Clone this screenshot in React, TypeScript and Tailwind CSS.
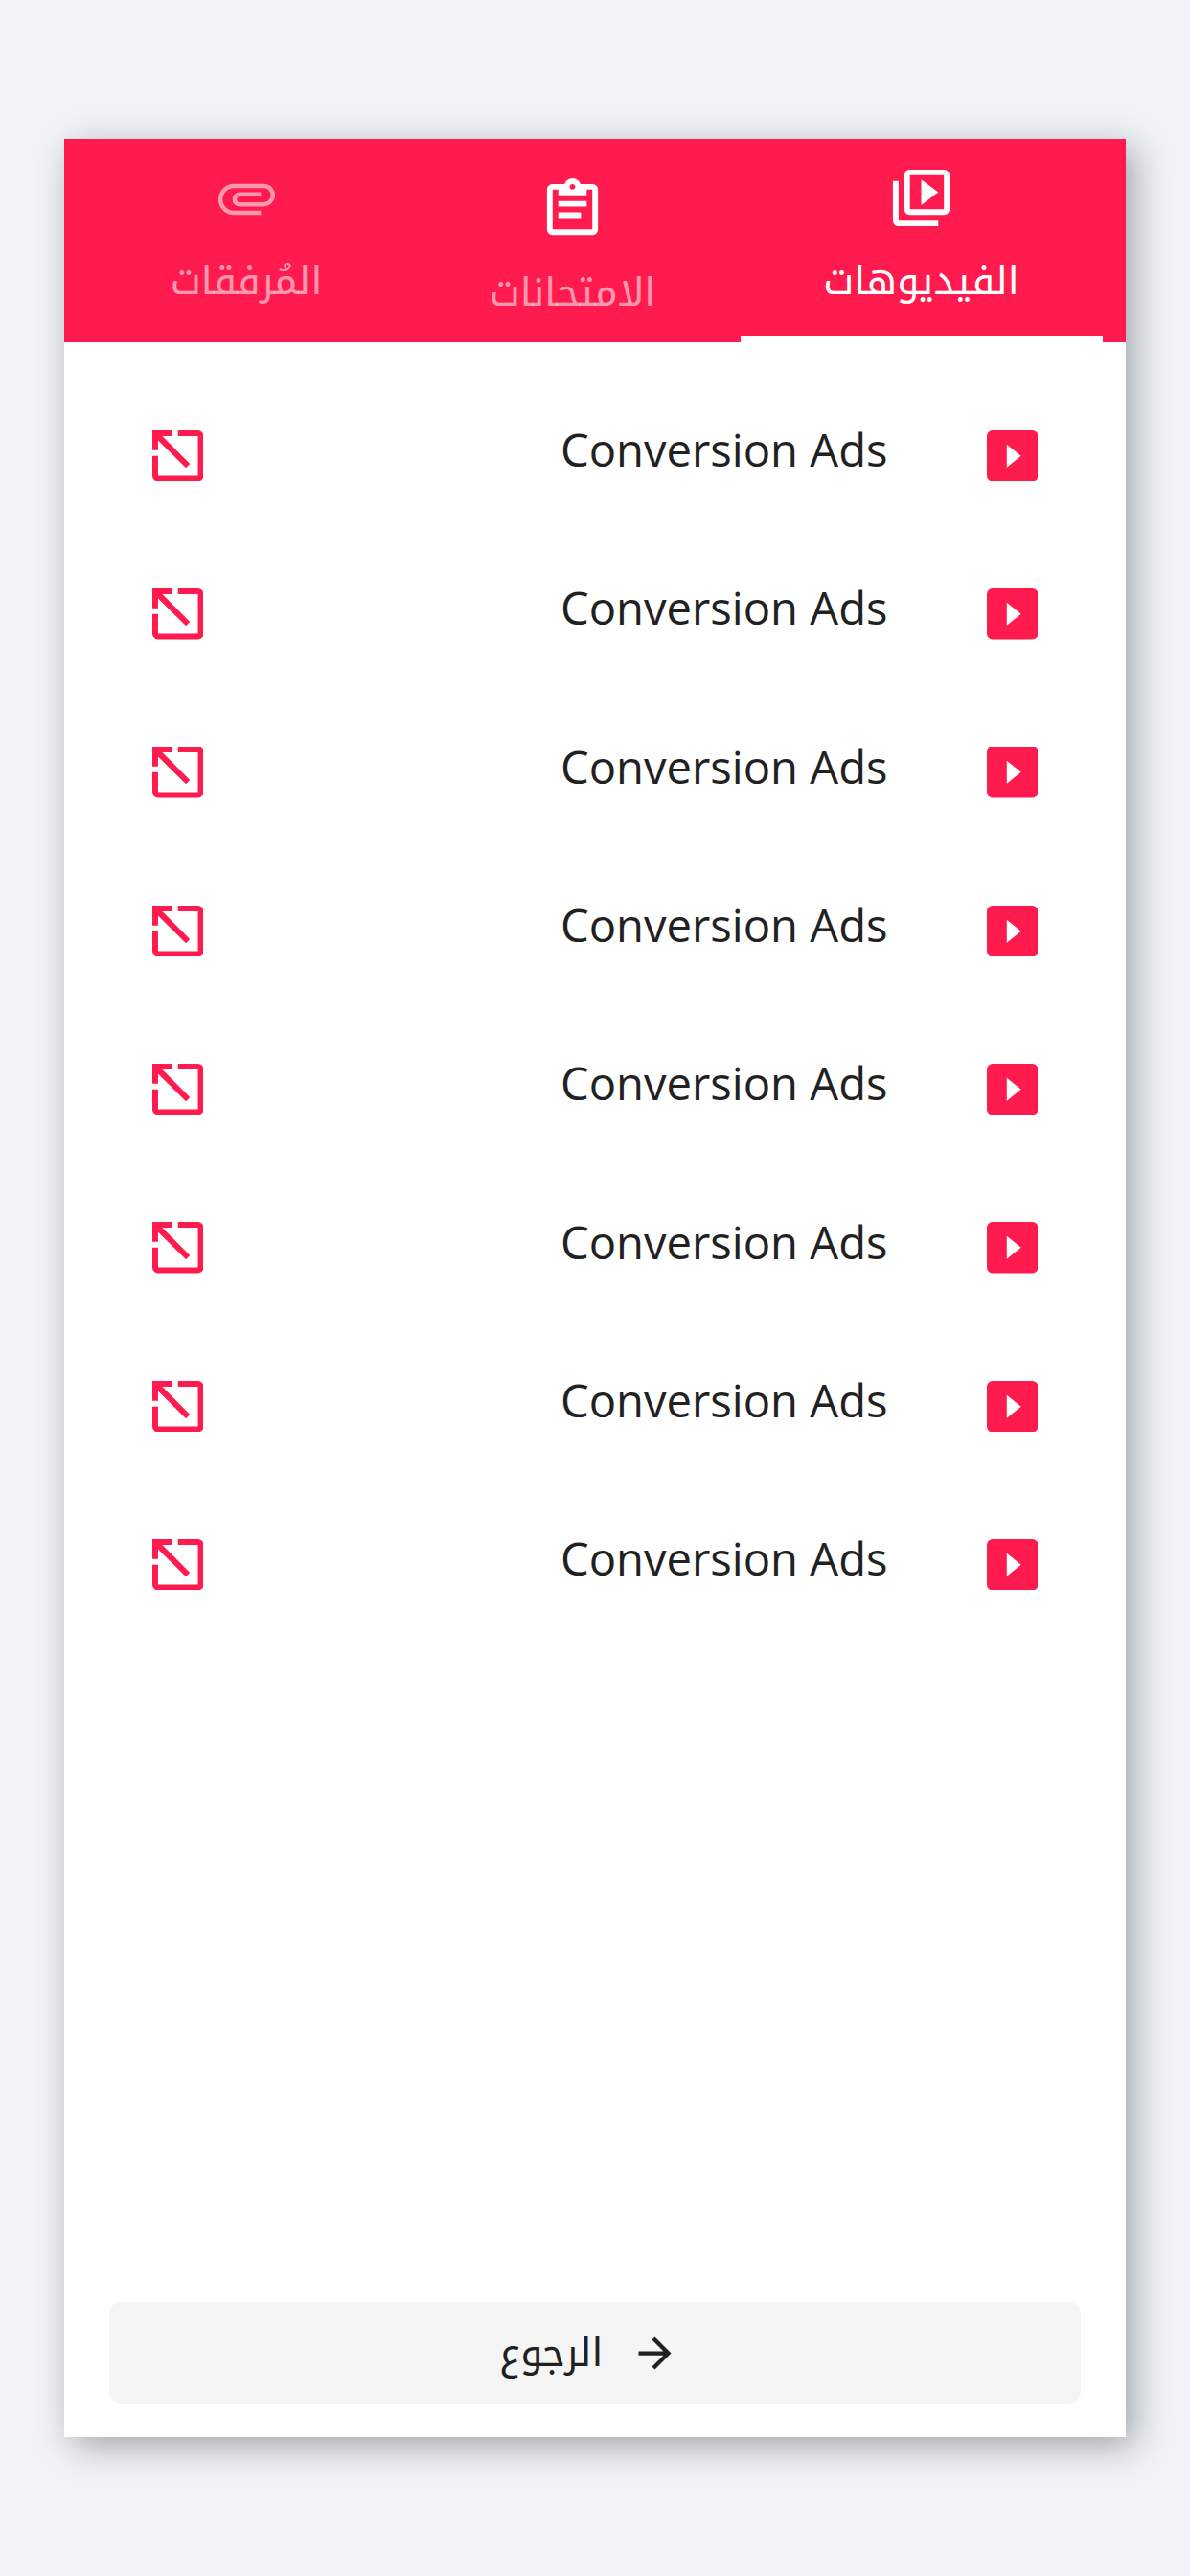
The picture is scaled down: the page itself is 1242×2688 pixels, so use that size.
import React from "react";

type IconProps = { className?: string };

const VideoLibraryIcon = ({ className }: IconProps) => (
  <svg viewBox="0 0 24 24" fill="currentColor" className={className}>
    <path d="M4 6H2v14c0 1.1.9 2 2 2h14v-2H4V6zm16-4H8c-1.1 0-2 .9-2 2v12c0 1.1.9 2 2 2h12c1.1 0 2-.9 2-2V4c0-1.1-.9-2-2-2zm0 14H8V4h12v12zM12 5.5v9l6-4.5-6-4.5z" />
  </svg>
);

const ClipboardIcon = ({ className }: IconProps) => (
  <svg viewBox="0 0 24 24" fill="currentColor" className={className}>
    <path
      fillRule="evenodd"
      d="M19 3h-4.18C14.4 1.84 13.3 1 12 1s-2.4.84-2.82 2H5c-1.1 0-2 .9-2 2v14c0 1.1.9 2 2 2h14c1.1 0 2-.9 2-2V5c0-1.1-.9-2-2-2zM12 3c.55 0 1 .45 1 1s-.45 1-1 1-1-.45-1-1 .45-1 1-1zM5 5h2v2h10V5h2v14H5zM7 9v2h10V9zM7 13v2h8v-2z"
    />
  </svg>
);

const AttachmentIcon = ({ className }: IconProps) => (
  <svg viewBox="0 0 24 24" fill="currentColor" className={className}>
    <path d="M2 12.5C2 9.46 4.46 7 7.5 7H18c2.21 0 4 1.79 4 4s-1.79 4-4 4H9.500C8.120 15 7 13.880 7 12.500S8.120 10 9.500 10H17v1.500H9.410c-.55 0-.91.45-.91 1s.36 1 .91 1H18c1.380 0 2.500-1.120 2.500-2.500S19.380 8.500 18 8.500H7.500c-2.210 0-4 1.790-4 4s1.790 4 4 4H17V18H7.500C4.460 18 2 15.540 2 12.500z" />
  </svg>
);

const OpenIcon = ({ className }: IconProps) => (
  <svg viewBox="0 0 18 18" fill="currentColor" className={className}>
    <path d="M0 0H7V2H3.500L13.200 11.800L11.800 13.200L2 3.500V7H0zM9 0H16A2 2 0 0 1 18 2V16A2 2 0 0 1 16 18H2A2 2 0 0 1 0 16V9H2V16H16V2H9z" />
  </svg>
);

const PlayBoxIcon = ({ className }: IconProps) => (
  <svg viewBox="0 0 18 18" fill="currentColor" className={className}>
    <path fillRule="evenodd" d="M2 0H16A2 2 0 0 1 18 2V16A2 2 0 0 1 16 18H2A2 2 0 0 1 0 16V2A2 2 0 0 1 2 0zM7 5V13L12 9z" />
  </svg>
);

const ArrowIcon = ({ className }: IconProps) => (
  <svg viewBox="0 0 24 24" fill="currentColor" className={className}>
    <path d="M12 4l-1.410 1.410L16.170 11H4v2h12.170l-5.580 5.590L12 20l8-8z" />
  </svg>
);

const lessons = Array.from({ length: 8 }, () => "Conversion Ads");

export default function App() {
  return (
    <div className="flex h-[2688px] w-[1242px] flex-col bg-[#f0f4f9] pl-[67px] pt-[144.500px] font-['Open_Sans','Noto_Kufi_Arabic','Noto_Sans_Arabic','DejaVu_Sans',sans-serif] text-[#212121]">
      <main className="flex h-[2398.500px] w-[1108px] flex-col bg-white shadow-[9px_9px_36px_rgba(0,0,0,0.33)]">
        <nav dir="rtl" className="flex h-[212.500px] shrink-0 bg-[#ff1b4e] pr-6 text-[41.200px] leading-none text-white">
          <div className="flex w-[378px] flex-col items-center border-b-[6px] border-white pr-px pt-[26.500px]">
            <VideoLibraryIcon className="size-[71px]" />
            <span className="mt-[29px] whitespace-nowrap">الفيديوهات</span>
          </div>
          <div className="flex w-[350px] flex-col items-center pr-px pt-[38.500px]">
            <ClipboardIcon className="size-[71px]" />
            <span className="mt-[29px] whitespace-nowrap text-white/55">الامتحانات</span>
          </div>
          <div className="flex w-[332px] flex-col items-center pt-[26.500px] text-white/55">
            <AttachmentIcon className="size-[71px]" />
            <span className="mt-[29px] whitespace-nowrap">المُرفقات</span>
          </div>
        </nav>
        <ul className="flex flex-1 flex-col pt-[36px]">
          {lessons.map((title, i) => (
            <li key={i} className="flex h-[165.300px] items-center pl-[91.500px] pr-[92px]">
              <OpenIcon className="size-[53.500px] text-[#ff1b4e]" />
              <span className="ml-auto mr-[103px] whitespace-nowrap pb-3 text-[47.200px] leading-none">{title}</span>
              <PlayBoxIcon className="size-[53.500px] text-[#ff1b4e]" />
            </li>
          ))}
        </ul>
        <button dir="rtl" className="mx-[47px] mb-[35.500px] flex h-[106px] items-center rounded-[12px] bg-[#f5f5f5] pr-[419.500px] text-[41.200px] leading-none">
          <ArrowIcon className="mt-0.5 size-[51px]" />
          <span className="mr-[28px] whitespace-nowrap pb-px">الرجوع</span>
        </button>
      </main>
    </div>
  );
}
